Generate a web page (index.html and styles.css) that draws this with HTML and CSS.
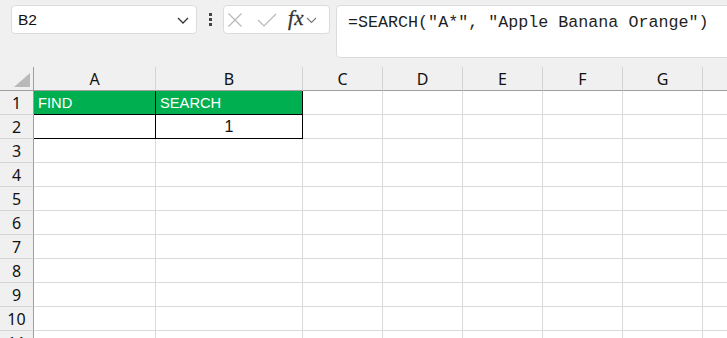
FILE: index.html
```html
<!DOCTYPE html>
<html>
<head>
<meta charset="utf-8">
<link rel="stylesheet" href="styles.css">
</head>
<body>
<div class="toolbar">
  <div class="namebox">
    <span class="ref">B2</span>
    <svg class="chev" width="12" height="7" viewBox="0 0 12 7"><path d="M1 1 L6 6 L11 1" fill="none" stroke="#333" stroke-width="1.3"/></svg>
  </div>
  <div class="dots"><i></i><i></i><i></i></div>
  <div class="fxbox">
    <svg class="ico" width="16" height="16" viewBox="0 0 16 16"><path d="M1.5 1.5 L14.5 14.5 M14.5 1.5 L1.5 14.5" fill="none" stroke="#b8b8b8" stroke-width="1.2"/></svg>
    <svg class="ico" width="20" height="14" viewBox="0 0 20 14"><path d="M1 7 L7 13 L19 1" fill="none" stroke="#b8b8b8" stroke-width="1.2"/></svg>
    <span class="fx">fx</span>
    <svg class="chev2" width="11" height="7" viewBox="0 0 11 7"><path d="M1 1 L5.5 5.5 L10 1" fill="none" stroke="#777" stroke-width="1.1"/></svg>
  </div>
  <div class="formula">=SEARCH("A*", "Apple Banana Orange")</div>
</div>
<div class="grid">
  <div class="corner"><span class="tri"></span></div>
  <div class="ch">A</div><div class="ch">B</div><div class="ch">C</div><div class="ch">D</div><div class="ch">E</div><div class="ch">F</div><div class="ch">G</div><div class="ch last"></div>

  <div class="rh">1</div>
  <div class="c green bk">FIND</div><div class="c green bk">SEARCH</div><div class="c"></div><div class="c"></div><div class="c"></div><div class="c"></div><div class="c"></div><div class="c"></div>

  <div class="rh">2</div>
  <div class="c bk"></div><div class="c bk num">1</div><div class="c"></div><div class="c"></div><div class="c"></div><div class="c"></div><div class="c"></div><div class="c"></div>

  <div class="rh">3</div><div class="c"></div><div class="c"></div><div class="c"></div><div class="c"></div><div class="c"></div><div class="c"></div><div class="c"></div><div class="c"></div>
  <div class="rh">4</div><div class="c"></div><div class="c"></div><div class="c"></div><div class="c"></div><div class="c"></div><div class="c"></div><div class="c"></div><div class="c"></div>
  <div class="rh">5</div><div class="c"></div><div class="c"></div><div class="c"></div><div class="c"></div><div class="c"></div><div class="c"></div><div class="c"></div><div class="c"></div>
  <div class="rh">6</div><div class="c"></div><div class="c"></div><div class="c"></div><div class="c"></div><div class="c"></div><div class="c"></div><div class="c"></div><div class="c"></div>
  <div class="rh">7</div><div class="c"></div><div class="c"></div><div class="c"></div><div class="c"></div><div class="c"></div><div class="c"></div><div class="c"></div><div class="c"></div>
  <div class="rh">8</div><div class="c"></div><div class="c"></div><div class="c"></div><div class="c"></div><div class="c"></div><div class="c"></div><div class="c"></div><div class="c"></div>
  <div class="rh">9</div><div class="c"></div><div class="c"></div><div class="c"></div><div class="c"></div><div class="c"></div><div class="c"></div><div class="c"></div><div class="c"></div>
  <div class="rh">10</div><div class="c"></div><div class="c"></div><div class="c"></div><div class="c"></div><div class="c"></div><div class="c"></div><div class="c"></div><div class="c"></div>
  <div class="rh">11</div><div class="c"></div><div class="c"></div><div class="c"></div><div class="c"></div><div class="c"></div><div class="c"></div><div class="c"></div><div class="c"></div>
</div>
</body>
</html>
```

FILE: styles.css
```css
* { box-sizing: border-box; }
html, body { margin: 0; padding: 0; }
body {
  background: #f0f0f0;
  width: 727px;
  height: 338px;
  overflow: hidden;
  font-family: "Noto Sans", "Open Sans", sans-serif;
}
.toolbar {
  display: flex;
  align-items: flex-start;
  height: 67px;
  padding: 5px 0 0 11px;
}
.namebox {
  width: 186px;
  height: 29px;
  background: #fff;
  border: 1px solid #dcdcdc;
  border-radius: 4px;
  display: flex;
  align-items: center;
  justify-content: space-between;
  padding: 0 7px 0 6px;
}
.ref {
  font-family: "Liberation Sans", Arial, sans-serif;
  font-size: 15.5px;
  color: #111;
}
.chev { margin-top: 1px; }
.dots {
  width: 26px;
  height: 29px;
  display: flex;
  flex-direction: column;
  align-items: center;
  justify-content: center;
  gap: 2px;
}
.dots i {
  display: block;
  width: 3px;
  height: 3px;
  background: #444;
}
.fxbox {
  width: 107px;
  height: 29px;
  background: #fff;
  border: 1px solid #dcdcdc;
  border-radius: 4px;
  display: flex;
  align-items: center;
  padding-left: 3px;
}
.fxbox .ico + .ico { margin-left: 14px; }
.fx {
  font-family: "Liberation Serif", "DejaVu Serif", serif;
  font-style: italic;
  font-size: 21px;
  color: #333;
  margin-left: 11px;
  line-height: 1;
  margin-top: -3px;
  letter-spacing: 0.5px;
  -webkit-text-stroke: 0.3px #333;
}
.chev2 { margin-left: 2px; margin-top: 1px; }
.formula {
  margin-left: 6px;
  flex: 1;
  margin-right: -12px;
  height: 53px;
  background: #fff;
  border: 1px solid #dcdcdc;
  border-radius: 4px;
  padding: 6px 0 0 11px;
  font-family: "Liberation Mono", "DejaVu Sans Mono", monospace;
  font-size: 16.7px;
  color: #1f1f1f;
  white-space: nowrap;
  line-height: 22px;
}
.grid {
  display: grid;
  grid-template-columns: 34px 122px 147px 80px 80px 80px 80px 80px 40px;
  grid-auto-rows: 24px;
  background: #fff;
}
.corner, .ch {
  background: #f0f0f0;
  border-bottom: 1px solid #9e9e9e;
}
.corner {
  border-right: 1px solid #9e9e9e;
  position: relative;
}
.tri {
  position: absolute;
  left: 14px;
  top: 6px;
  width: 0;
  height: 0;
  border-left: 16px solid transparent;
  border-bottom: 14px solid #b9b9b9;
}
.ch {
  border-right: 1px solid #d4d4d4;
  display: flex;
  align-items: center;
  justify-content: center;
  font-size: 16px;
  color: #111;
}
.ch.last { border-right: none; }
.rh {
  background: #f0f0f0;
  border-right: 1px solid #9e9e9e;
  border-bottom: 1px solid #d4d4d4;
  display: flex;
  align-items: center;
  justify-content: center;
  font-size: 16px;
  color: #111;
}
.c {
  border-right: 1px solid #dadada;
  border-bottom: 1px solid #dadada;
  font-family: "Liberation Sans", Arial, sans-serif;
  font-size: 14.7px;
  display: flex;
  align-items: center;
  padding-left: 4px;
  color: #111;
}
.c.green {
  background: #00b050;
  color: #fff;
}
.c.bk {
  border-right-color: #000;
  border-bottom-color: #000;
}
.c.num {
  justify-content: center;
  padding-left: 0;
  font-size: 16px;
}
```
